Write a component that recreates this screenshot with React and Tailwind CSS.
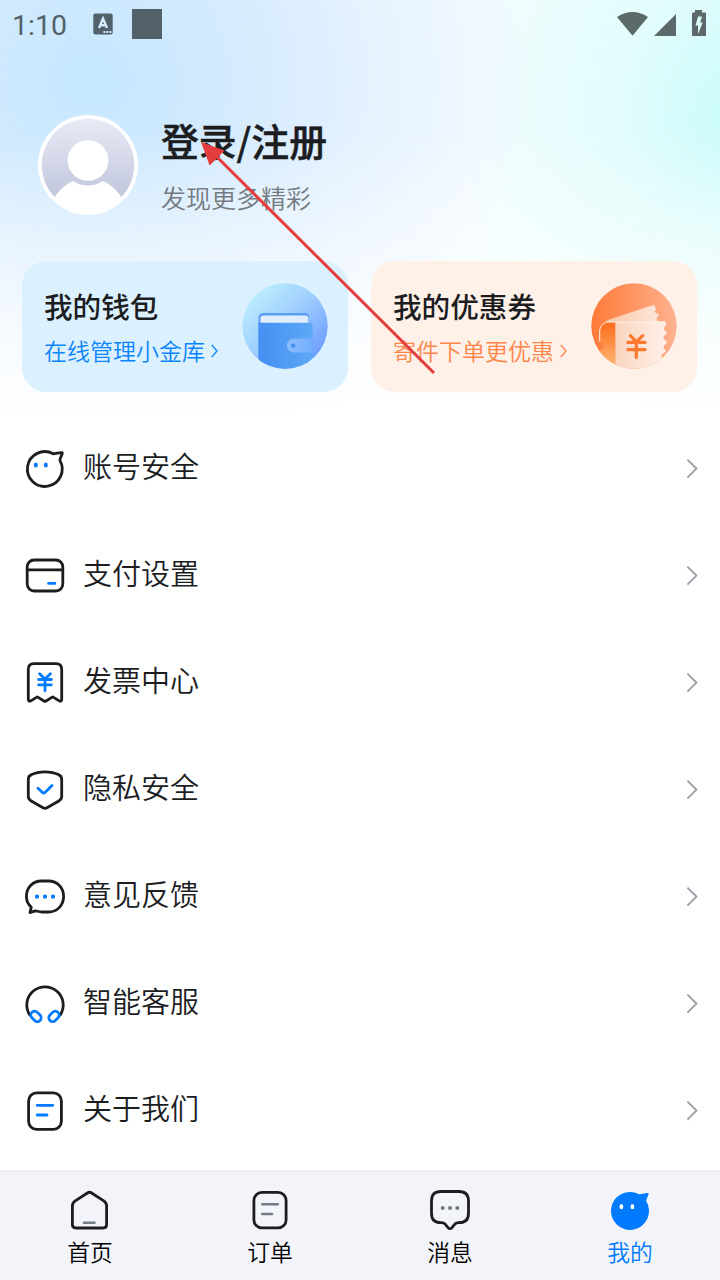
import { clsx } from "clsx";

const INK = "#1b1d1f";
const BLUE = "#007aff";

function LineIcon({ children, height = 43 }) {
  return (
    <svg
      className="shrink-0"
      fill="none"
      height={height}
      stroke={INK}
      strokeLinecap="round"
      strokeLinejoin="round"
      strokeWidth="2.8"
      viewBox={`0 0 44 ${height}`}
      width="44"
    >
      {children}
    </svg>
  );
}

const MENU_ITEMS = [
  {
    label: "账号安全",
    icon: (
      <>
        <path d="M30.2 6.8 C33 6.8 36 5.4 39.3 5.6 C39.4 8.2 37.2 10 36.9 13.4 A17.4 17.4 0 1 1 30.2 6.8 Z" />
        <ellipse cx="12.8" cy="18" fill={BLUE} rx="2" ry="2.5" stroke="none" />
        <ellipse cx="22.8" cy="18" fill={BLUE} rx="2" ry="2.5" stroke="none" />
      </>
    ),
  },
  {
    label: "支付设置",
    icon: (
      <>
        <rect height="31" rx="7" width="35.6" x="4.2" y="6" />
        <path d="M4.2 15.8 H39.8" />
        <path d="M25.6 29.4 H31.8" stroke={BLUE} />
      </>
    ),
  },
  {
    label: "发票中心",
    icon: (
      <>
        <path d="M5.3 38.3 V8.3 Q5.3 2.6 11 2.6 H33 Q38.7 2.6 38.7 8.3 V38.3 Q38.7 41 36.2 39.9 L29.7 35.9 L23 40 Q22 40.7 21 40 L14.3 35.9 L7.8 39.9 Q5.3 41 5.3 38.3 Z" />
        <path
          d="M16.6 12.8 L22 18 L27.4 12.8 M15.6 18.5 H28.4 M15.6 23.8 H28.4 M22 18 V29.8"
          stroke={BLUE}
        />
      </>
    ),
  },
  {
    label: "隐私安全",
    icon: (
      <>
        <path d="M5.3 11.5 Q5.3 7.8 8.6 6.6 Q14 3.8 22 3.8 Q30 3.8 35.4 6.6 Q38.7 7.8 38.7 11.5 V28.3 Q38.7 31.2 36.2 32.7 L24 39.8 Q22 41 20 39.8 L7.8 32.7 Q5.3 31.2 5.3 28.3 Z" />
        <path d="M15 20.3 L19.4 24.4 Q20.7 25.5 22 24.4 L29 17.4" stroke={BLUE} />
      </>
    ),
  },
  {
    label: "意见反馈",
    icon: (
      <>
        <path d="M18.5 6 H25.5 C34.5 6 40.6 13 40.6 21.6 C40.6 30.5 34 37 25.5 37 H19 C15.5 37 13.6 35.6 12 35.9 L7 37.6 L8.3 32.2 C4.6 29 3.4 25.6 3.4 21.6 C3.4 13 9.5 6 18.5 6 Z" />
        <g fill={BLUE} stroke="none">
          <circle cx="14" cy="21.7" r="2.1" />
          <circle cx="22" cy="21.7" r="2.1" />
          <circle cx="30" cy="21.7" r="2.1" />
        </g>
      </>
    ),
  },
  {
    label: "智能客服",
    icon: (
      <>
        <path d="M6.8 33 A18.2 18.2 0 1 1 37.2 33" />
        <g stroke={BLUE}>
          <rect height="7.6" rx="3.8" transform="rotate(45 13 34.4)" width="11.4" x="7.3" y="30.6" />
          <rect height="7.6" rx="3.8" transform="rotate(-45 31 34.4)" width="11.4" x="25.3" y="30.6" />
        </g>
      </>
    ),
  },
  {
    label: "关于我们",
    icon: (
      <>
        <rect height="36.4" rx="8" width="32.8" x="5.6" y="3.9" />
        <path d="M14.2 16.3 H29.8 M14.2 26 H24" stroke={BLUE} />
      </>
    ),
  },
];

const TABS = [
  {
    label: "首页",
    icon: (
      <>
        <path d="M4.4 18 Q4.4 14.7 7.2 12.9 L19.4 5 Q21.5 3.6 23.6 5 L35.8 12.9 Q38.6 14.7 38.6 18 V36.5 Q38.6 40 35.1 40 H7.9 Q4.4 40 4.4 36.5 Z" />
        <path d="M16 34.7 H26.5" stroke="#737b85" strokeWidth="2.6" />
      </>
    ),
  },
  {
    label: "订单",
    icon: (
      <>
        <rect height="35.6" rx="8" width="32.2" x="5.9" y="4.3" />
        <path d="M14.2 16.3 H29.8 M14.2 26 H24" stroke="#737b85" strokeWidth="2.6" />
      </>
    ),
  },
  {
    label: "消息",
    icon: (
      <>
        <path d="M13 3.5 H31 Q40.5 3.5 40.5 13 V25.2 Q40.5 34.7 31 34.7 Q28 34.7 26.6 36.4 L24 39.6 Q22 41.8 20 39.6 L17.4 36.4 Q16 34.7 13 34.7 Q3.5 34.7 3.5 25.2 V13 Q3.5 3.5 13 3.5 Z" />
        <g fill="#737b85" stroke="none">
          <circle cx="14.7" cy="20" r="2" />
          <circle cx="22" cy="20" r="2" />
          <circle cx="29.3" cy="20" r="2" />
        </g>
      </>
    ),
  },
  {
    label: "我的",
    active: true,
    icon: (
      <g stroke="none">
        <path
          d="M31 6.2 C34 6.2 37 4.6 40.4 5 C41.2 8 38.4 9.8 38.2 13 A19 19 0 1 1 31 6.2 Z"
          fill={BLUE}
        />
        <ellipse cx="13.4" cy="18.7" fill="white" rx="1.9" ry="2.6" />
        <ellipse cx="24.4" cy="18.7" fill="white" rx="1.9" ry="2.6" />
      </g>
    ),
  },
];

function StatusBar() {
  return (
    <div className="flex h-12 items-center justify-between pl-3 pr-[13px]">
      <div className="flex items-center">
        <span className="w-[81px] pt-[3px] font-[Roboto] text-[28.5px] leading-8 text-[#53616a]">
          1:10
        </span>
        <svg height="22" viewBox="0 0 20 22" width="20">
          <rect fill="#53616a" height="21" rx="2" width="19.4" x="0.3" y="0.5" />
          <path
            d="M6 15 L10 5.5 L14 15 M7.4 12.2 H12.6"
            fill="none"
            stroke="#d3ecff"
            strokeWidth="2.4"
          />
          <path d="M10.4 18 h2 v2 h-2 z M13.4 18 h2 v2 h-2 z M16.4 18 h2 v2 h-2 z" fill="#d3ecff" />
        </svg>
        <div className="ml-[19px] size-[30px] bg-[#53616a]" />
      </div>
      <svg fill="#5b6a69" height="28" viewBox="0 0 92 28" width="92">
        <path d="M2 7 Q17.5 -3 33 7 L17.5 25.8 Z" />
        <path d="M61 4 V26 H39 Z" />
        <path
          clipRule="evenodd"
          d="M80 0 H87 V2.6 H90 Q91 2.6 91 3.6 V25 Q91 26 90 26 H78 Q77 26 77 25 V3.6 Q77 2.6 78 2.6 H80 Z M83 6.5 L80.5 15.5 H83 V24 L87.8 12.4 H85.2 L87 6.5 Z"
          fillRule="evenodd"
        />
      </svg>
    </div>
  );
}

function Avatar() {
  return (
    <svg className="shrink-0" height="100" viewBox="0 0 100 100" width="100">
      <defs>
        <linearGradient id="avatarFill" x1="0" x2="0" y1="0" y2="1">
          <stop offset="0" stopColor="#e8ebf5" />
          <stop offset="0.8" stopColor="#c3c8de" />
        </linearGradient>
        <clipPath id="avatarClip">
          <circle cx="50" cy="50" r="47" />
        </clipPath>
      </defs>
      <circle cx="50" cy="50" fill="white" r="50" />
      <circle cx="50" cy="50" fill="url(#avatarFill)" r="46.2" />
      <circle cx="50" cy="45.4" fill="white" r="20.4" />
      <path
        clipPath="url(#avatarClip)"
        d="M14 86 Q23 71 35 66 Q50 75 65 66 Q77 71 86 86 L70 100 H30 Z"
        fill="white"
      />
    </svg>
  );
}

function WalletIcon() {
  return (
    <svg height="86" viewBox="0 0 86 86" width="86">
      <defs>
        <linearGradient id="walletDisc" x1="0.1" x2="0.9" y1="0.1" y2="0.9">
          <stop offset="0" stopColor="#bdf0ff" />
          <stop offset="0.5" stopColor="#9ccbff" />
          <stop offset="1" stopColor="#6898ff" />
        </linearGradient>
        <linearGradient id="walletBody">
          <stop offset="0" stopColor="#448ff1" />
          <stop offset="1" stopColor="#5da8f7" />
        </linearGradient>
        <linearGradient id="walletClasp">
          <stop offset="0" stopColor="#8bbcff" />
          <stop offset="1" stopColor="#73aefa" />
        </linearGradient>
        <clipPath id="walletClip">
          <circle cx="43" cy="43" r="42.7" />
        </clipPath>
      </defs>
      <circle cx="43" cy="43" fill="url(#walletDisc)" r="42.7" />
      <g clipPath="url(#walletClip)">
        <path d="M16.5 86 V35 Q16.5 30 21.5 30 H63.5 Q67 30 67 34 V50 H20 V86 Z" fill="#5c9df8" />
        <path d="M18.5 40 V35.5 Q18.5 32.4 21.6 32.4 H63.4 Q66.3 32.4 66.3 35.5 V40 Z" fill="#e0edfd" />
        <path d="M16.5 39.7 H68.2 Q70.7 39.7 70.7 42.2 V86 H16.5 Z" fill="url(#walletBody)" />
        <path d="M70.7 55.6 H51.7 A7 7 0 0 0 51.7 69.6 H70.7 Z" fill="url(#walletClasp)" />
        <circle cx="51.2" cy="62.6" fill="#4590f2" r="2.2" />
      </g>
    </svg>
  );
}

function CouponIcon() {
  return (
    <svg height="86" viewBox="0 0 86 86" width="86">
      <defs>
        <linearGradient id="couponDisc">
          <stop offset="0" stopColor="#ff7a38" />
          <stop offset="1" stopColor="#ffb291" />
        </linearGradient>
        <linearGradient id="couponFlap">
          <stop offset="0" stopColor="#ffc5a6" />
          <stop offset="1" stopColor="#fbe6da" />
        </linearGradient>
        <linearGradient id="couponPaper">
          <stop offset="0" stopColor="#f9d5bf" />
          <stop offset="1" stopColor="#fff0e8" />
        </linearGradient>
        <linearGradient id="couponStub" x1="0" x2="0" y1="0" y2="1">
          <stop offset="0" stopColor="#ff6c1d" />
          <stop offset="1" stopColor="#ffbc7b" />
        </linearGradient>
        <clipPath id="couponClip">
          <circle cx="43" cy="43" r="42.7" />
        </clipPath>
      </defs>
      <circle cx="43" cy="43" fill="url(#couponDisc)" r="42.7" />
      <g clipPath="url(#couponClip)">
        <path
          d="M14 39 L18 36.4 L61 22.4 Q63.5 21.4 64.2 24 Q66 26.4 63.6 28.4 Q64.4 30.6 67.4 30.8 Q68.4 33 65.6 34.6 Q65.4 36.6 67.4 38.8 Z"
          fill="url(#couponFlap)"
        />
        <path
          d="M24.4 39.8 H14.6 Q8.7 42 8.7 47.5 V58.6 A4.6 4.6 0 0 1 8.7 67.6 V86 H24.4 Z"
          fill="url(#couponStub)"
        />
        <path
          d="M24.4 38.6 H74 Q76 40 74.6 42.4 Q71.2 45.4 74.4 48 Q77 50 74.2 52 Q70.6 54.6 74.2 57.2 Q77 59.4 74.2 61.4 Q70.6 64 74 66.4 Q75.6 68.4 72.6 70 Q69 72 71 75 V86 H24.4 Z"
          fill="url(#couponPaper)"
        />
        <path
          d="M8.7 58.6 V47.5 Q8.9 42 15.6 39 H74"
          fill="none"
          stroke="#fff1e6"
          strokeWidth="1"
        />
        <path
          d="M39.4 52.6 L45.3 58.6 L51.8 52.6 M36.8 59.4 H54 M36.8 66.6 H54 M45.3 59 V74.4"
          fill="none"
          stroke="#ff7a2c"
          strokeLinecap="round"
          strokeWidth="3.2"
        />
      </g>
    </svg>
  );
}

function PromoCard({ className, icon, link, linkClass, title }) {
  return (
    <div
      className={clsx(
        "flex h-[131px] w-[326px] justify-between rounded-3xl pl-[22px] pr-[20px] pt-[22px]",
        className,
      )}
    >
      <div className="pt-[2px]">
        <div className="text-[28.6px] font-medium leading-[42px] text-[#1b1d1f]">{title}</div>
        <div className={clsx("mt-[5px] flex items-center text-[23px] font-[350] leading-9", linkClass)}>
          {link}
          <svg className="ml-1.5 mt-[2px]" fill="none" height="14" viewBox="0 0 7 14" width="7">
            <path d="M0.8 1 L6 7 L0.8 13" stroke="currentColor" strokeWidth="1.3" />
          </svg>
        </div>
      </div>
      {icon}
    </div>
  );
}

function MenuRow({ icon, label }) {
  return (
    <li className="flex h-[107px] items-center pl-[23px] pr-[21px]">
      <LineIcon>{icon}</LineIcon>
      <span className="ml-4 flex-1 pb-2 text-[29px] font-[350] leading-10 text-[#1b1d1f]">
        {label}
      </span>
      <svg fill="none" height="22" viewBox="0 0 14 22" width="14">
        <path d="M2.4 1.6 L11.4 10.6 L2.4 19.6" stroke="#9da2a8" strokeWidth="2" />
      </svg>
    </li>
  );
}

// Red pointer drawn over the header, aimed at the login title
function PointerArrow() {
  return (
    <svg
      className="pointer-events-none absolute left-[195px] top-[135px]"
      height="245"
      viewBox="195 135 245 245"
      width="245"
    >
      <path d="M434 373 L213 153" stroke="#e43d3e" strokeWidth="3" />
      <path d="M201 142 L224.6 150.6 L209.6 165.4 Z" fill="#e43d3e" />
    </svg>
  );
}

export default function App() {
  return (
    <div className="relative flex h-[1280px] w-[720px] flex-col overflow-hidden bg-white bg-[linear-gradient(180deg,rgba(255,255,255,0)_0px,rgba(255,255,255,0)_130px,rgba(255,255,255,0.45)_260px,#fff_430px),radial-gradient(ellipse_260px_330px_at_740px_120px,#c8fbfa_0%,rgba(222,252,251,0.8)_45%,rgba(243,254,255,0)_100%),radial-gradient(ellipse_440px_440px_at_90px_80px,#c5e7ff_0%,#d8ecff_40%,#e8f3ff_70%,#f1f9ff_90%,#f1fdff_100%)] font-['Noto_Sans_CJK_SC',sans-serif]">
      <StatusBar />

      <header className="flex h-[213px] pl-[38px] pt-[67px]">
        <Avatar />
        <div className="-mt-[3px] ml-[23px]">
          <h1 className="text-[37.8px] font-medium leading-[56px] text-[#1b1d1f] [-webkit-text-stroke:0.5px_#1b1d1f]">
            登录/注册
          </h1>
          <p className="mt-[11px] text-[25px] font-[350] leading-9 text-[#747a80]">发现更多精彩</p>
        </div>
      </header>

      <div className="flex gap-[23px] pl-[22px]">
        <PromoCard
          className="bg-[#dcf1ff]"
          icon={<WalletIcon />}
          link="在线管理小金库"
          linkClass="text-[#0a84ff]"
          title="我的钱包"
        />
        <PromoCard
          className="bg-[#fff0e8]"
          icon={<CouponIcon />}
          link="寄件下单更优惠"
          linkClass="text-[#ff8548]"
          title="我的优惠券"
        />
      </div>

      <ul className="mt-[23px]">
        {MENU_ITEMS.map((item) => (
          <MenuRow icon={item.icon} key={item.label} label={item.label} />
        ))}
      </ul>

      <nav className="mt-auto grid h-[110px] grid-cols-4 border-t-2 border-[#eeeff0] bg-[#f3f4f9]">
        {TABS.map((tab) => (
          <div className="flex flex-col items-center pt-4" key={tab.label}>
            <LineIcon height={44}>{tab.icon}</LineIcon>
            <span
              className={clsx(
                "mt-1 text-[22.8px] font-[350] leading-8",
                tab.active ? "text-[#007aff]" : "text-black",
              )}
            >
              {tab.label}
            </span>
          </div>
        ))}
      </nav>

      <PointerArrow />
    </div>
  );
}
